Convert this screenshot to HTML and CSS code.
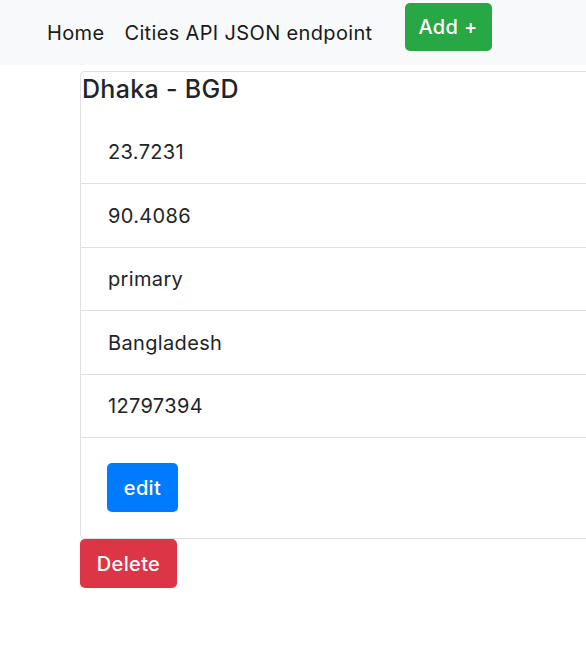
FILE: index.html
```html
<!DOCTYPE html>
<html lang="en">
<head>
<meta charset="utf-8">
<title>Dhaka - BGD</title>
<link rel="stylesheet" href="styles.css">
</head>
<body>
<nav class="navbar">
  <a class="nav-link" href="#">Home</a>
  <a class="nav-link" href="#">Cities API JSON endpoint</a>
  <a class="btn btn-success btn-add" href="#">Add +</a>
</nav>
<main class="container">
  <div class="card">
    <h3 class="card-title">Dhaka - BGD</h3>
    <ul class="list-group">
      <li class="list-item">23.7231</li>
      <li class="list-item">90.4086</li>
      <li class="list-item">primary</li>
      <li class="list-item">Bangladesh</li>
      <li class="list-item">12797394</li>
      <li class="list-item list-item-last"><a class="btn btn-primary" href="#">edit</a></li>
    </ul>
  </div>
  <a class="btn btn-danger" href="#">Delete</a>
</main>
</body>
</html>
```
FILE: styles.css
```css
* { box-sizing: border-box; }
html, body { overflow-x: hidden; }
body {
  margin: 0;
  font-family: Inter, "Noto Sans", "DejaVu Sans", sans-serif;
  font-size: 20px;
  line-height: 30px;
  letter-spacing: 0.35px;
  color: #212529;
  background: #fff;
}
.navbar {
  display: flex;
  align-items: center;
  height: 65px;
  padding: 0 0 0 37px;
  background: #f8f9fa;
  margin-bottom: 6px;
}
.nav-link {
  color: #1a1a1a;
  text-decoration: none;
  padding: 0 10px;
}
.btn {
  display: inline-flex;
  align-items: center;
  justify-content: center;
  height: 49px;
  border-radius: 5px;
  color: #fff;
  text-decoration: none;
  font-weight: 500;
}
.btn-add {
  align-self: flex-start;
  margin-top: 3px;
  margin-left: 22px;
  width: 87px;
  height: 48px;
  background: #28a745;
}
.btn-primary { background: #007bff; width: 71px; }
.btn-danger { background: #dc3545; width: 97px; }
.container { padding-left: 80px; }
.card {
  width: 640px;
  border: 1px solid #dfdfdf;
  border-radius: 5px;
}
.card-title {
  margin: 0;
  padding: 2px 0 0 1px;
  height: 48px;
  font-size: 25px;
  line-height: 30px;
  letter-spacing: 0.3px;
  font-weight: 500;
}
.list-group { list-style: none; margin: 0; padding: 0; }
.list-item {
  padding: 16.25px 26px 16.25px 27px;
  border-top: 1px solid #dfdfdf;
}
.list-item:first-child { border-top: 0; padding-top: 17px; }
.list-item-last { padding: 25px 26px 25.75px 26px; }
```
